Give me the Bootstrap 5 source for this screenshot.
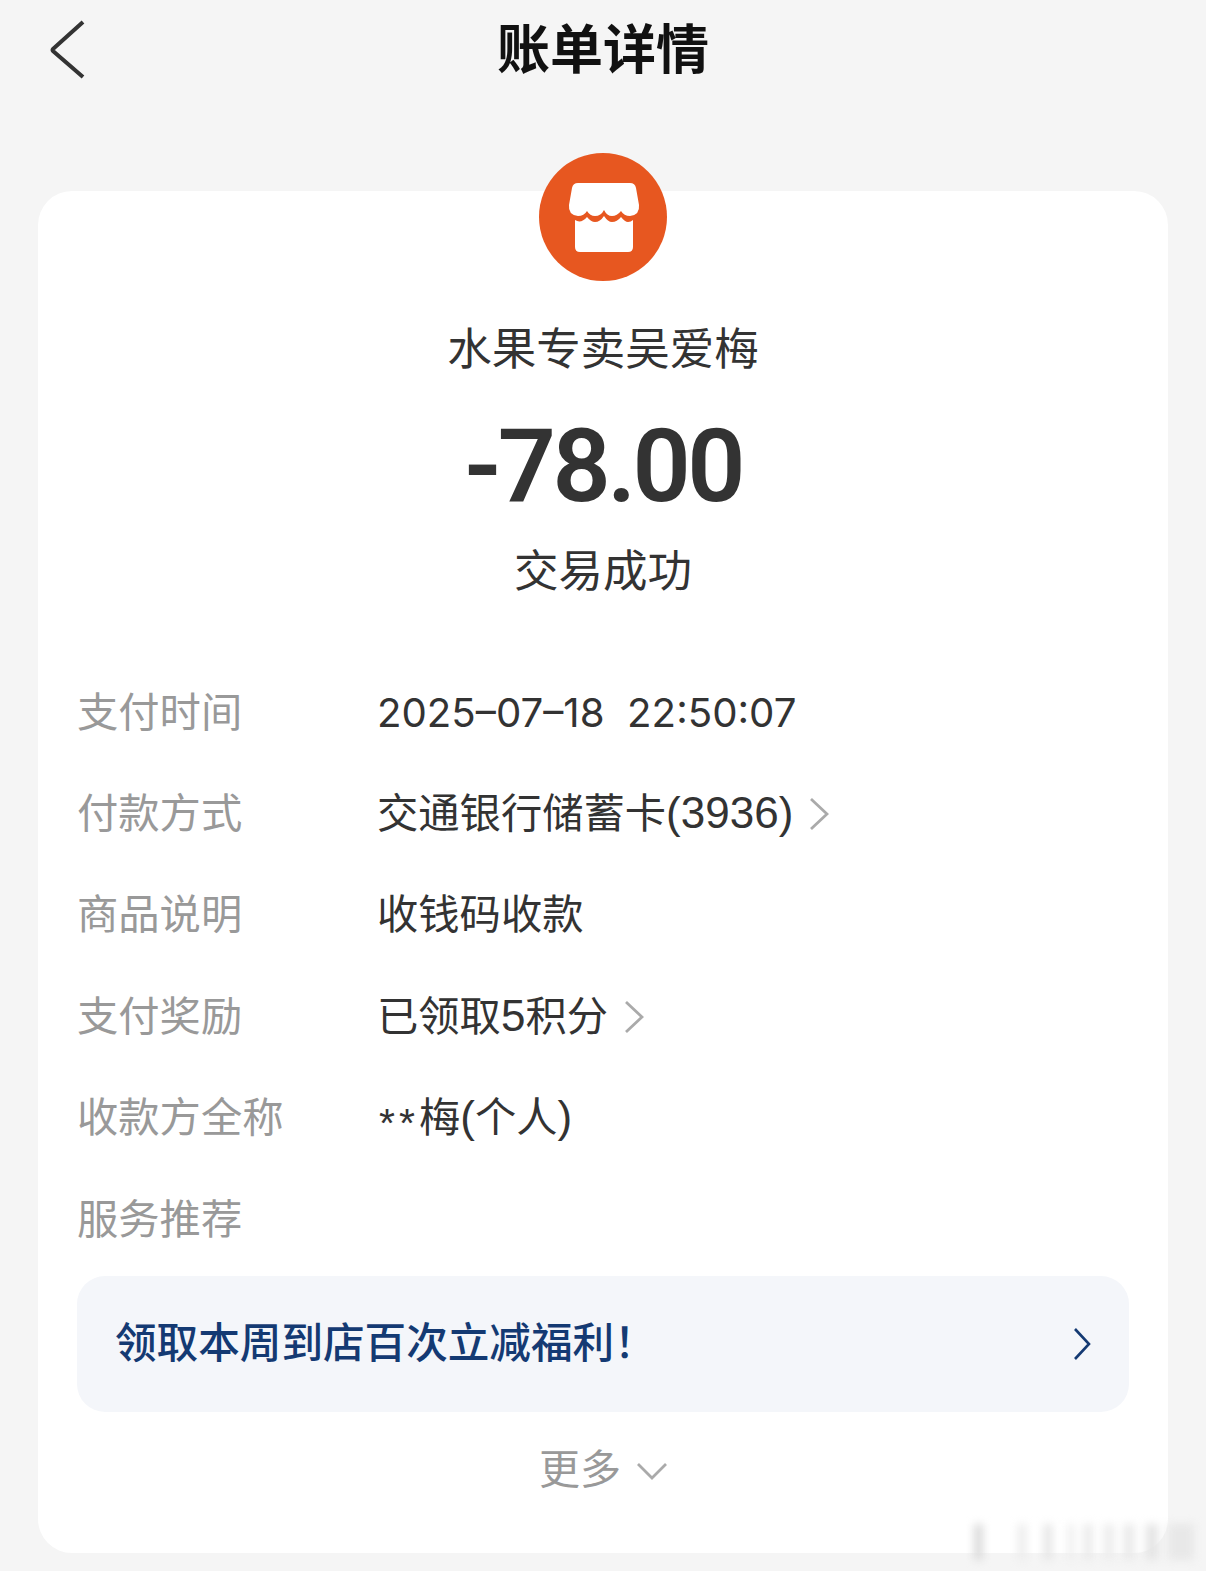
<!DOCTYPE html>
<html lang="zh-CN">
<head>
  <meta charset="UTF-8">
  <title>账单详情</title>
  <link rel="stylesheet" href="https://cdn.jsdelivr.net/npm/bootstrap@5.3.0/dist/css/bootstrap.min.css">
  <style>
    body {
      background: #f5f5f5;
      font-family: "Liberation Sans", "Noto Sans CJK SC", sans-serif;
      color: #333;
      width: 1206px;
      height: 1571px;
      overflow: hidden;
      position: relative;
    }
    .top-bar { height: 191px; padding: 0 38px; }
    .top-head { height: 98px; padding-top: 2px; }
    .back-btn { left: 50px; top: 20px; }
    .page-title { font-size: 53px; font-weight: 700; color: #111; line-height: 98px; margin: 0; }
    .bill-card { margin: 0 38px; height: 1362px; background: #fff; border-radius: 34px; padding: 0 39px; }
    .shop-icon { width: 128px; height: 128px; margin-top: -38px; display: block; }
    .shop-name { font-size: 44.5px; line-height: 60px; margin-top: 39px; color: #333; }
    .amount { font-family: Roboto, "Liberation Sans", sans-serif; font-size: 102px; font-weight: 600; letter-spacing: -3.6px; line-height: 116px; margin-top: 28px; color: #333; }
    .status { font-size: 44.5px; line-height: 60px; margin-top: 18px; color: #333; }
    .detail-list { margin-top: 60px; }
    .detail-row { height: 101.4px; font-size: 41.3px; line-height: 60px; }
    .detail-label { width: 300px; color: #999; flex-shrink: 0; }
    .detail-value { color: #333; }
    .date-text { font-family: Inter, "Liberation Sans", sans-serif; font-size: 40.2px; }
    .latin-text { font-size: 44px; line-height: 1; }
    .star-text { font-size: 41px; letter-spacing: 4px; margin-left: 2px; vertical-align: -5px; line-height: 1; }
    .promo { height: 136px; background: #f4f6fa; border-radius: 28px; padding: 0 38px; margin-top: 6px; color: #143a73; font-size: 41.6px; font-weight: 500; }
    .more-line { color: #999; font-size: 41px; margin-top: 28px; }
    .wm { left: 968px; top: 1524px; width: 228px; height: 36px; filter: blur(4px);
      background: linear-gradient(90deg,
        transparent 0 6px, #dadada 6px 15px, transparent 15px 50px, #ececec 50px 58px, transparent 58px 76px,
        #e4e4e4 76px 84px, transparent 84px 100px, #ececec 100px 106px, transparent 106px 116px,
        #e8e8e8 116px 124px, transparent 124px 136px, #ececec 136px 146px, transparent 146px 156px,
        #e8e8e8 156px 166px, transparent 166px 178px, #e4e4e4 178px 190px, transparent 190px 200px,
        #e8e8e8 200px 226px, transparent 226px); }
  </style>
</head>
<body>
  <div class="top-bar">
    <div class="top-head text-center">
      <h1 class="page-title">账单详情</h1>
    </div>
  </div>
  <svg class="back-btn position-absolute" width="36" height="60" viewBox="0 0 36 60"><path d="M33 2 L3 29 Q2 30 3 31 L33 57" fill="none" stroke="#333" stroke-width="4"/></svg>

  <div class="bill-card">
    <div class="d-flex justify-content-center">
      <svg class="shop-icon" viewBox="0 0 128 128">
        <circle cx="64" cy="64" r="64" fill="#e75720"/>
        <path d="M39 30 H91 Q96 30 97 35 L100 52 Q101 62 91 63 Q85 63 82 58 Q78 63 73 63 Q68 63 65 57 Q62 63 56 63 Q51 63 48 58 Q45 63 39 63 Q29 62 30 52 L33 35 Q34 30 39 30Z" fill="#fff"/>
        <path d="M36 67 Q42 71 48 64 Q52 69 56 69 Q61 69 65 63 Q69 69 73 69 Q78 69 82 64 Q86 69 89 69 Q92 69 94 67 V94 Q94 99 89 99 H41 Q36 99 36 94Z" fill="#fff"/>
      </svg>
    </div>
    <div class="shop-name text-center">水果专卖吴爱梅</div>
    <div class="amount text-center">-78.00</div>
    <div class="status text-center">交易成功</div>

    <div class="detail-list">
      <div class="detail-row d-flex align-items-center"><div class="detail-label">支付时间</div><div class="detail-value"><span class="date-text">2025–07–18&nbsp; 22:50:07</span></div></div>
      <div class="detail-row d-flex align-items-center"><div class="detail-label">付款方式</div><div class="detail-value d-flex align-items-center gap-3"><span>交通银行储蓄卡<span class="latin-text">(3936)</span></span>
        <svg width="20" height="34" viewBox="0 0 20 34"><path d="M2 2 L18 17 L2 32" fill="none" stroke="#aaa" stroke-width="2.8"/></svg></div></div>
      <div class="detail-row d-flex align-items-center"><div class="detail-label">商品说明</div><div class="detail-value">收钱码收款</div></div>
      <div class="detail-row d-flex align-items-center"><div class="detail-label">支付奖励</div><div class="detail-value d-flex align-items-center gap-3"><span>已领取<span class="latin-text">5</span>积分</span>
        <svg width="20" height="34" viewBox="0 0 20 34"><path d="M2 2 L18 17 L2 32" fill="none" stroke="#aaa" stroke-width="2.8"/></svg></div></div>
      <div class="detail-row d-flex align-items-center"><div class="detail-label">收款方全称</div><div class="detail-value"><span class="star-text">**</span>梅<span class="latin-text">(</span>个人<span class="latin-text">)</span></div></div>
      <div class="detail-row d-flex align-items-center"><div class="detail-label">服务推荐</div></div>
    </div>

    <div class="promo d-flex align-items-center justify-content-between">
      <span>领取本周到店百次立减福利！</span>
      <svg width="18" height="32" viewBox="0 0 18 32"><path d="M2 1 L16 16 L2 31" fill="none" stroke="#143a73" stroke-width="2.6"/></svg>
    </div>
    <div class="more-line d-flex align-items-center justify-content-center gap-3">更多
      <svg width="30" height="18" viewBox="0 0 30 18"><path d="M1 2 L15 16 L29 2" fill="none" stroke="#aaa" stroke-width="2.8"/></svg>
    </div>
  </div>
  <div class="wm position-absolute"></div>
  <script src="https://cdn.jsdelivr.net/npm/bootstrap@5.3.0/dist/js/bootstrap.bundle.min.js"></script>
</body>
</html>
